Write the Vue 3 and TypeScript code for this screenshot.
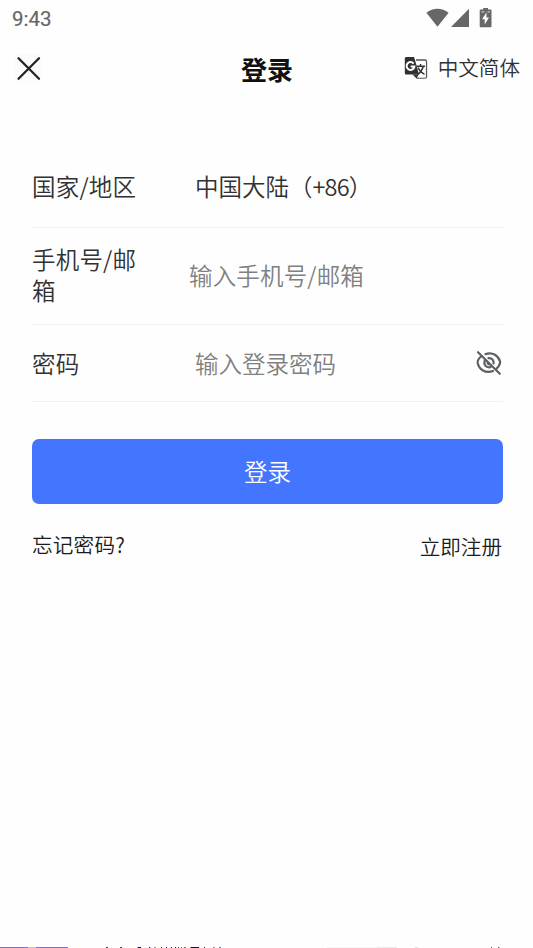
<script setup lang="ts">
import { ref } from 'vue'

const account = ref('')
const password = ref('')
const visible = ref(false)

// Top edge of the banner lying below the fold: [x, width, colour]
const peek: [number, number, string][] = [
  [0, 28, '#8468ea'], [28, 8, '#cdbff4'], [36, 32, '#8468ea'],
  [106, 2, '#4a4652'], [120, 2, '#4a4652'], [137, 1, '#8a9bb5'], [138, 3, '#16142e'],
  [149, 1, '#20202c'], [150, 1, '#b9c5d8'], [154, 2, '#9a9488'], [161, 1, '#282638'],
  [166, 1, '#181828'], [171, 1, '#302c40'], [175, 1, '#18182c'], [178, 1, '#403848'],
  [181, 1, '#48648c'], [184, 2, '#8c7868'], [190, 1, '#a08878'], [191, 8, '#1a1024'],
  [204, 1, '#181838'], [213, 1, '#6888a8'], [214, 1, '#a89890'], [219, 2, '#7080a0'],
  [327, 50, '#f4f4f4'], [377, 20, '#ebebeb'], [415, 3, '#e4e4e4'],
  [491, 1, '#555555'], [498, 1, '#555555'], [499, 1, '#bbbbbb'],
]
</script>

<template>
  <main class="screen">
    <div class="status">
      <span class="time">9:43</span>
      <svg class="status-icons" width="68" height="22" viewBox="0 0 68 22">
        <path d="M0.400 4.800C7-.6 16-.6 22.600 4.800L11.500 18.800Z" />
        <path d="M43 0.800V19H25Z" />
        <path d="M57.200 0h4.800v1.500h2.500q1 0 1 1v15.700q0 1-1 1h-9.800q-1 0-1-1V2.500q0-1 1-1h2.500Z" />
        <path class="bolt" d="M60.500 4.500L56 11.200h2.700V16.500L63 9.600H60.500Z" />
        <path class="notch" d="M55.500 3.900H58.500M61.500 3.900H64" />
      </svg>
    </div>

    <header class="bar">
      <button class="close" aria-label="关闭">
        <svg width="28" height="29" viewBox="0 0 28 29">
          <path d="M4.500 4.300L25 24.700M25 4.300L4.500 24.700" />
        </svg>
      </button>
      <h1>登录</h1>
      <button class="language">
        <svg width="24" height="24" viewBox="0 0 24 24">
          <path d="M12 4H21q1.500 0 1.500 1.500v15.200q0 1.500-1.500 1.500h-8.500" class="sheet" />
          <path d="M2.200 1H10L11 4L15 18.500H2.200Q.8 18.500 .8 17V2.500Q.8 1 2.200 1Z" class="page" />
          <path d="M8.500 18.500H14.500L12.600 22.600Z" class="page" />
          <path d="M12.300 5.500H21.500V21.500H14.800L16 18.500Z" class="inner" />
          <path d="M9.600 7.600A3.900 3.900 0 1 0 10.400 10.500H6.700" class="g" />
          <path d="M12.500 10.200H21M16.500 8V10.200M19.300 10.500Q17.800 15.500 13.500 18.700M14 11.500Q16 16 20.500 18.300" class="wen" />
        </svg>
        <span>中文简体</span>
      </button>
    </header>

    <form class="form" @submit.prevent>
      <div class="row region">
        <span class="label">国家/地区</span>
        <span class="value">中国大陆（<span class="code">+86</span>）</span>
      </div>
      <label class="row account">
        <span class="label">手机号/邮箱</span>
        <input v-model="account" placeholder="输入手机号/邮箱" />
      </label>
      <div class="row password">
        <span class="label">密码</span>
        <input v-model="password" :type="visible ? 'text' : 'password'" placeholder="输入登录密码" />
        <button type="button" class="eye" aria-label="显示密码" @click="visible = !visible">
          <svg width="26" height="26" viewBox="0 0 26 26">
            <path d="M9.500 4.100C17 1.500 22.500 6 24.200 11.800Q24 15.500 20.500 18.800M5.500 6C2.500 8.500 1.500 11.500 1.700 13C3 19.500 9.500 23.800 17 21" />
            <path d="M12.500 8.100C16 7.800 18 10.300 17.500 13.500M9 10C7 14.500 10 18 14.500 17.200M11.700 12.300Q11.500 14 13.500 14.300" />
            <path d="M2 2.200L23.800 23.800" />
          </svg>
        </button>
      </div>
      <button class="submit">登录</button>
      <div class="links">
        <a class="forgot">忘记密码?</a>
        <a class="register">立即注册</a>
      </div>
    </form>

    <svg class="peek" width="533" height="1" viewBox="0 0 533 1" shape-rendering="crispEdges">
      <rect v-for="p in peek" :key="p[0]" :x="p[0]" y="0" :width="p[1]" height="1" :fill="p[2]" />
    </svg>
  </main>
</template>

<style>
body {
  background: #fefefe;
}
</style>

<style scoped>
.screen {
  box-sizing: border-box;
  display: flex;
  flex-direction: column;
  height: 948px;
  overflow: hidden;
  color: #303133;
  background: #fefefe;
  font-family: "Noto Sans CJK SC", sans-serif;
  font-weight: 350;
}
button,
input {
  padding: 0;
  border: 0;
  outline: 0;
  background: none;
  color: inherit;
  font: inherit;
}
svg {
  display: block;
  flex: none;
}
.status {
  display: flex;
  justify-content: space-between;
  height: 38px;
  padding: 0 39px 0 12px;
  color: #666;
}
.time {
  font: 400 20.500px/38px Roboto, sans-serif;
  -webkit-text-stroke: 0.200px #666;
}
.status-icons {
  margin-top: 8px;
  fill: #676767;
}
.status-icons .bolt {
  fill: #fefefe;
}
.notch {
  stroke: #ddd;
  stroke-width: 1;
}
.bar {
  box-sizing: border-box;
  display: grid;
  grid-template-columns: 1fr auto 1fr;
  align-items: center;
  height: 62px;
  padding: 0 13px 2px 14px;
}
.close {
  justify-self: start;
  background: #fbfbfb;
}
.close svg {
  fill: none;
  stroke: #222;
  stroke-width: 2.300;
  stroke-linecap: round;
}
h1 {
  margin: 0;
  padding-top: 2px;
  color: #111;
  font-size: 26px;
  font-weight: 700;
  line-height: 36px;
}
.language {
  display: flex;
  justify-self: end;
  align-items: center;
  gap: 10px;
  font-size: 20.600px;
  line-height: 30px;
}
.language span {
  margin-top: -2px;
}
.page {
  fill: #303133;
}
.sheet {
  fill: #fefefe;
  stroke: #555;
  stroke-width: 1.300;
}
.inner {
  fill: #fefefe;
}
.g {
  fill: none;
  stroke: #fff;
  stroke-width: 2;
}
.wen {
  fill: none;
  stroke: #303133;
  stroke-width: 1.400;
}
.form {
  padding: 48px 30px 0 32px;
  font-size: 23.500px;
  line-height: 31px;
}
.row {
  box-sizing: border-box;
  display: flex;
  align-items: center;
  border-bottom: 1px solid #f1f1f1;
}
.region {
  height: 80px;
  padding-bottom: 2px;
}
.account {
  height: 97px;
  padding-bottom: 2px;
}
.password {
  height: 77px;
}
.label {
  flex: none;
  width: 117px;
  letter-spacing: 0.200px;
}
.value {
  margin-left: 46px;
}
.code {
  letter-spacing: -0.800px;
}
input {
  flex: 1;
  min-width: 0;
  height: 40px;
  margin-left: 40px;
}
.account input {
  letter-spacing: 0.160px;
}
.password input {
  margin-left: 46px;
}
input::placeholder {
  color: #808080;
  opacity: 1;
}
.eye svg {
  fill: none;
  stroke: #5d6066;
  stroke-width: 2.200;
  stroke-linecap: round;
}
.eye {
  margin-right: 1px;
}
.submit {
  display: block;
  width: 100%;
  height: 65px;
  margin-top: 37px;
  border-radius: 7px;
  background: #4375ff;
  color: #fff;
}
.links {
  display: flex;
  justify-content: space-between;
  color: #1b1b1b;
  font-size: 20.600px;
  line-height: 30px;
}
.forgot {
  padding-top: 25px;
  letter-spacing: 0.200px;
}
.register {
  padding: 27px 1px 0 0;
}
.peek {
  margin-top: auto;
}
</style>
